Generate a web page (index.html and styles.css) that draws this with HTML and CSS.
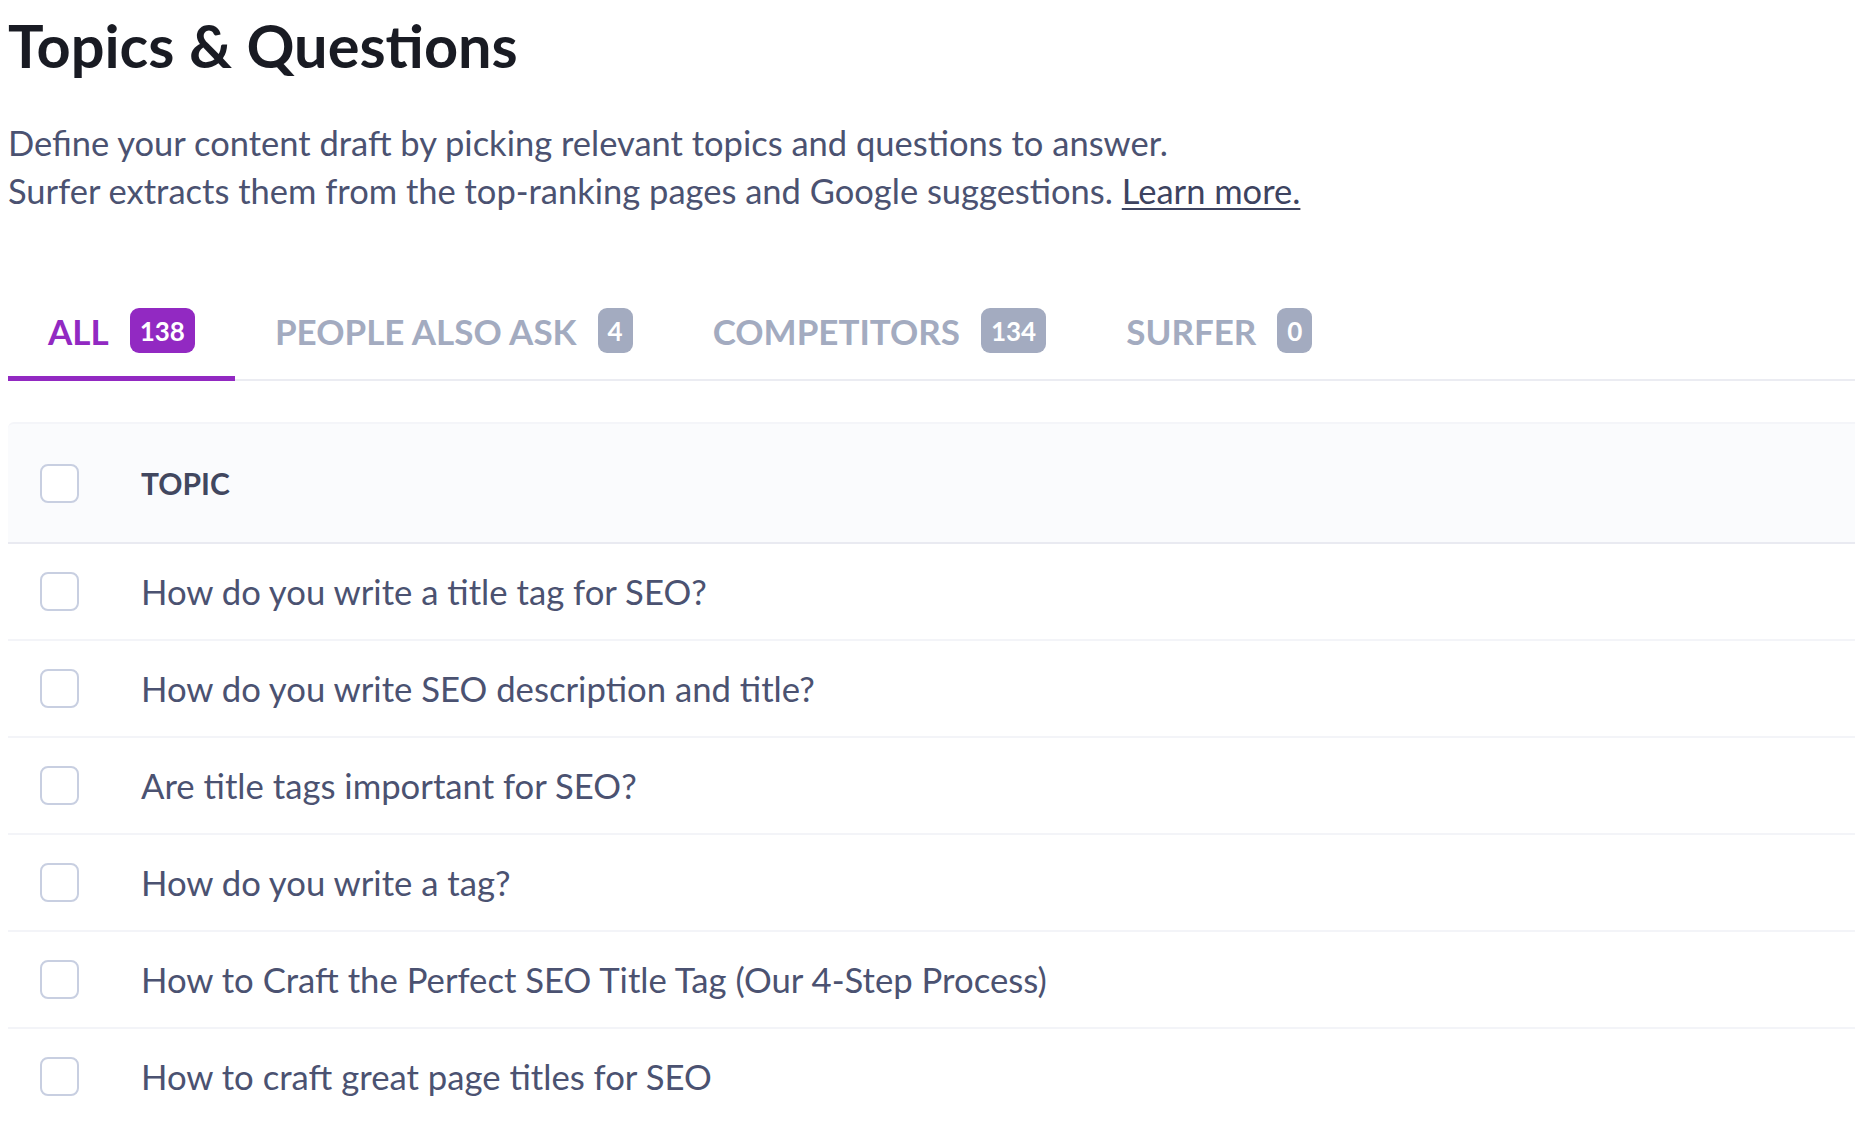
FILE: index.html
```html
<!DOCTYPE html>
<html lang="en">
<head>
<meta charset="utf-8">
<title>Topics &amp; Questions</title>
<link rel="stylesheet" href="styles.css">
</head>
<body>
<main class="page">
  <h1 class="title">Topics &amp; Questions</h1>
  <p class="lead">Define your content draft by picking relevant topics and questions to answer.<br>Surfer extracts them from the top-ranking pages and Google suggestions. <a class="link" href="#">Learn more.</a></p>

  <nav class="tabs">
    <div class="tab active"><span class="tab-label">ALL</span><span class="badge">138</span></div>
    <div class="tab"><span class="tab-label">PEOPLE ALSO ASK</span><span class="badge">4</span></div>
    <div class="tab"><span class="tab-label">COMPETITORS</span><span class="badge">134</span></div>
    <div class="tab"><span class="tab-label">SURFER</span><span class="badge">0</span></div>
  </nav>

  <section class="table">
    <div class="row head">
      <span class="check"></span>
      <span class="cell-head">TOPIC</span>
    </div>
    <div class="row"><span class="check"></span><span class="cell">How do you write a title tag for SEO?</span></div>
    <div class="row"><span class="check"></span><span class="cell">How do you write SEO description and title?</span></div>
    <div class="row"><span class="check"></span><span class="cell">Are title tags important for SEO?</span></div>
    <div class="row"><span class="check"></span><span class="cell">How do you write a tag?</span></div>
    <div class="row"><span class="check"></span><span class="cell">How to Craft the Perfect SEO Title Tag (Our 4-Step Process)</span></div>
    <div class="row"><span class="check"></span><span class="cell">How to craft great page titles for SEO</span></div>
  </section>
</main>
</body>
</html>
```

FILE: styles.css
```css
* { box-sizing: border-box; }
html, body {
  margin: 0;
  padding: 0;
  background: #ffffff;
  overflow: hidden;
}
body {
  font-family: Lato, "Noto Sans", "Liberation Sans", sans-serif;
  color: #4b5271;
}
.page {
  padding: 10px 0 0 8px;
}
.title {
  margin: 0;
  font-size: 59.5px;
  line-height: 1.2;
  font-weight: 700;
  color: #191b23;
}
.lead {
  margin: 38px 0 0 0;
  font-size: 34.5px;
  line-height: 48px;
  color: #4b5271;
}
.link {
  color: #3d4360;
  text-decoration: underline;
  text-underline-offset: 4px;
  text-decoration-thickness: 2px;
}
.tabs {
  display: flex;
  margin-top: 70px;
  border-bottom: 2px solid #ebecf2;
}
.tab {
  display: flex;
  align-items: center;
  gap: 21px;
  height: 96px;
  padding: 0 40px;
  border-bottom: 5px solid transparent;
  margin-bottom: -2px;
  font-size: 35px;
  font-weight: 700;
  color: #a3abc0;
}
.tab.active {
  color: #9229c2;
  border-bottom-color: #9229c2;
}
.badge {
  display: inline-flex;
  align-items: center;
  justify-content: center;
  min-width: 35px;
  height: 45px;
  padding: 0 10px;
  border-radius: 9px;
  background: #a3abc0;
  color: #ffffff;
  font-size: 26px;
  font-weight: 700;
}
.tab.active .badge {
  background: #9229c2;
}
.table {
  margin-top: 41px;
}
.row {
  display: flex;
  align-items: center;
  height: 97px;
  padding-left: 32px;
  border-bottom: 2px solid #f3f4f8;
}
.row.head {
  height: 122px;
  background: #fafbfd;
  border-top: 2px solid #f4f5f9;
  border-bottom: 2px solid #e9eaf1;
  border-top-left-radius: 6px;
}
.check {
  flex: none;
  width: 39px;
  height: 39px;
  border: 2px solid #c8cfe1;
  border-radius: 8px;
  background: #ffffff;
}
.cell, .cell-head {
  margin-left: 62px;
}
.cell {
  font-size: 34.7px;
  color: #4b5271;
}
.cell-head {
  font-size: 30px;
  font-weight: 700;
  color: #41475f;
}
```
